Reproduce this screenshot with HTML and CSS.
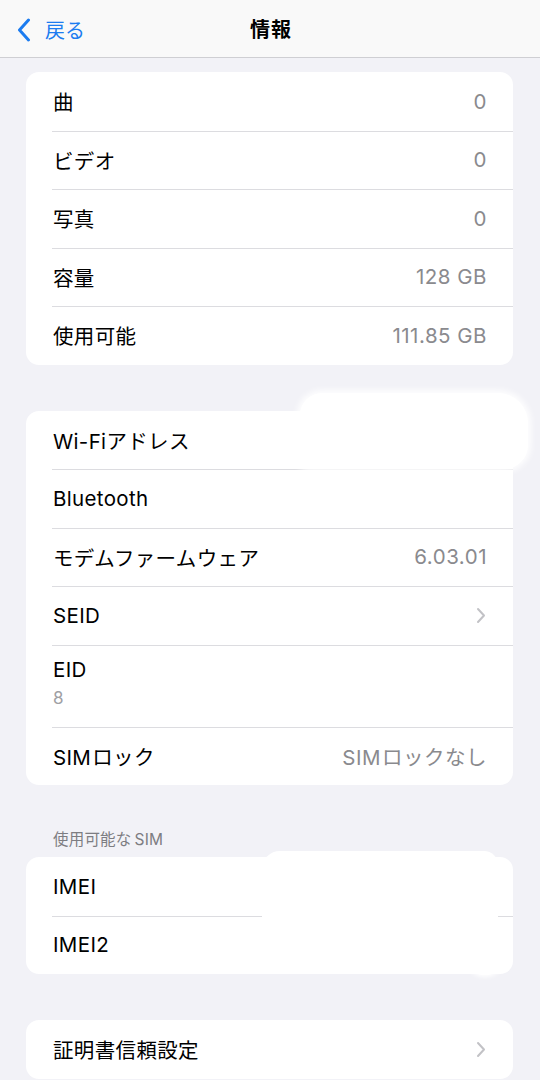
FILE: index.html
```html
<!DOCTYPE html>
<html lang="ja">
<head>
<meta charset="utf-8">
<title>情報</title>
<link rel="stylesheet" href="styles.css">
</head>
<body>
<header class="nav">
  <a class="back">
    <svg class="back-icon" width="14" height="24" viewBox="0 0 14 24"><path d="M11.5 2 L2.5 12 L11.5 22" fill="none" stroke="#1c7cf0" stroke-width="3" stroke-linecap="round" stroke-linejoin="round"/></svg>
    <span>戻る</span>
  </a>
  <h1 class="title">情報</h1>
</header>
<main class="content">
  <section class="card">
    <div class="row"><span class="label">曲</span><span class="value">0</span></div>
    <div class="row"><span class="label">ビデオ</span><span class="value">0</span></div>
    <div class="row"><span class="label">写真</span><span class="value">0</span></div>
    <div class="row"><span class="label">容量</span><span class="value">128 GB</span></div>
    <div class="row"><span class="label">使用可能</span><span class="value">111.85 GB</span></div>
  </section>

  <section class="card card-gap">
    <div class="redact redact-wifi"></div>
    <div class="row"><span class="label">Wi-Fiアドレス</span></div>
    <div class="row"><span class="label">Bluetooth</span></div>
    <div class="row"><span class="label">モデムファームウェア</span><span class="value">6.03.01</span></div>
    <div class="row"><span class="label">SEID</span><span class="chev"><svg width="10" height="17" viewBox="0 0 10 17"><path d="M2 2 L8 8.5 L2 15" fill="none" stroke="#c2c2c6" stroke-width="2" stroke-linecap="round" stroke-linejoin="round"/></svg></span></div>
    <div class="row row-tall"><div class="stack"><span class="label">EID</span><span class="sub">8</span></div></div>
    <div class="row"><span class="label">SIM<span class="sp"></span>ロック</span><span class="value">SIM<span class="sp"></span>ロックなし</span></div>
  </section>

  <h2 class="section-head">使用可能な<span class="sp-s"></span>SIM</h2>
  <section class="card">
    <div class="redact redact-imei"></div>
    <div class="redact redact-imei-bump"></div>
    <div class="row"><span class="label">IMEI</span></div>
    <div class="row"><span class="label">IMEI2</span></div>
  </section>

  <section class="card card-gap">
    <div class="row"><span class="label">証明書信頼設定</span><span class="chev"><svg width="10" height="17" viewBox="0 0 10 17"><path d="M2 2 L8 8.5 L2 15" fill="none" stroke="#c2c2c6" stroke-width="2" stroke-linecap="round" stroke-linejoin="round"/></svg></span></div>
  </section>
</main>
</body>
</html>
```

FILE: styles.css
```css
* { box-sizing: border-box; }
html, body { margin: 0; padding: 0; }
body {
  background: #f2f2f7;
  font-family: Inter, "Noto Sans CJK JP", sans-serif;
  color: #000;
  width: 540px;
  height: 1080px;
  overflow: hidden;
}
.nav {
  position: relative;
  height: 58px;
  background: #f9f9f9;
  border-bottom: 1px solid #cfcfd3;
  display: flex;
  align-items: center;
  justify-content: center;
}
.back {
  position: absolute;
  left: 17px;
  top: 15px;
  display: flex;
  align-items: center;
  gap: 14px;
  color: #1c7cf0;
  font-size: 20px;
}
.back-icon { display: block; }
.title {
  margin: 0;
  font-size: 20px;
  font-weight: 700;
  letter-spacing: 1px;
  padding-left: 2px;
}
.content {
  padding: 14px 27px 0 26px;
}
.card {
  position: relative;
  background: #fff;
  border-radius: 13px;
}
.card-gap { margin-top: 46px; }
.row {
  position: relative;
  height: 58.5px;
  display: flex;
  align-items: center;
  justify-content: space-between;
  padding: 0 26px 0 27px;
}
.row + .row::before {
  content: "";
  position: absolute;
  left: 26px;
  right: 0;
  top: 0;
  height: 1px;
  background: #dcdce0;
}
.row-tall { height: 82px; align-items: flex-start; padding-top: 12px; }
.stack { display: flex; flex-direction: column; }
.label { font-size: 20.5px; letter-spacing: 0.35px; }
.value { font-size: 20.5px; color: #8a8a8e; letter-spacing: 0.5px; }
.sp { display: inline-block; width: 1px; }
.sp-s { display: inline-block; width: 3px; }
.sub { font-size: 17px; color: #a0a0a4; margin-top: 6px; }
.chev { display: flex; align-items: center; margin-right: 1px; }
.section-head {
  margin: 42px 0 8px 27px;
  font-size: 15.5px;
  font-weight: 400;
  color: #7d7d82;
  letter-spacing: 0.2px;
}
.redact {
  position: absolute;
  background: #fff;
  z-index: 2;
}
.redact-wifi {
  left: 274px;
  top: -18px;
  width: 228px;
  height: 76px;
  border-radius: 22px 30px 24px 10px;
  box-shadow: 0 0 6px 3px rgba(255,255,255,0.9);
}
.redact-imei {
  left: 236px;
  top: -6px;
  width: 236px;
  height: 110px;
  border-radius: 18px 14px 10px 10px;
}
.redact-imei-bump {
  left: 443px;
  top: 100px;
  width: 32px;
  height: 18px;
  border-radius: 4px 4px 16px 16px;
  box-shadow: 0 0 4px 2px rgba(255,255,255,0.9);
}
```
